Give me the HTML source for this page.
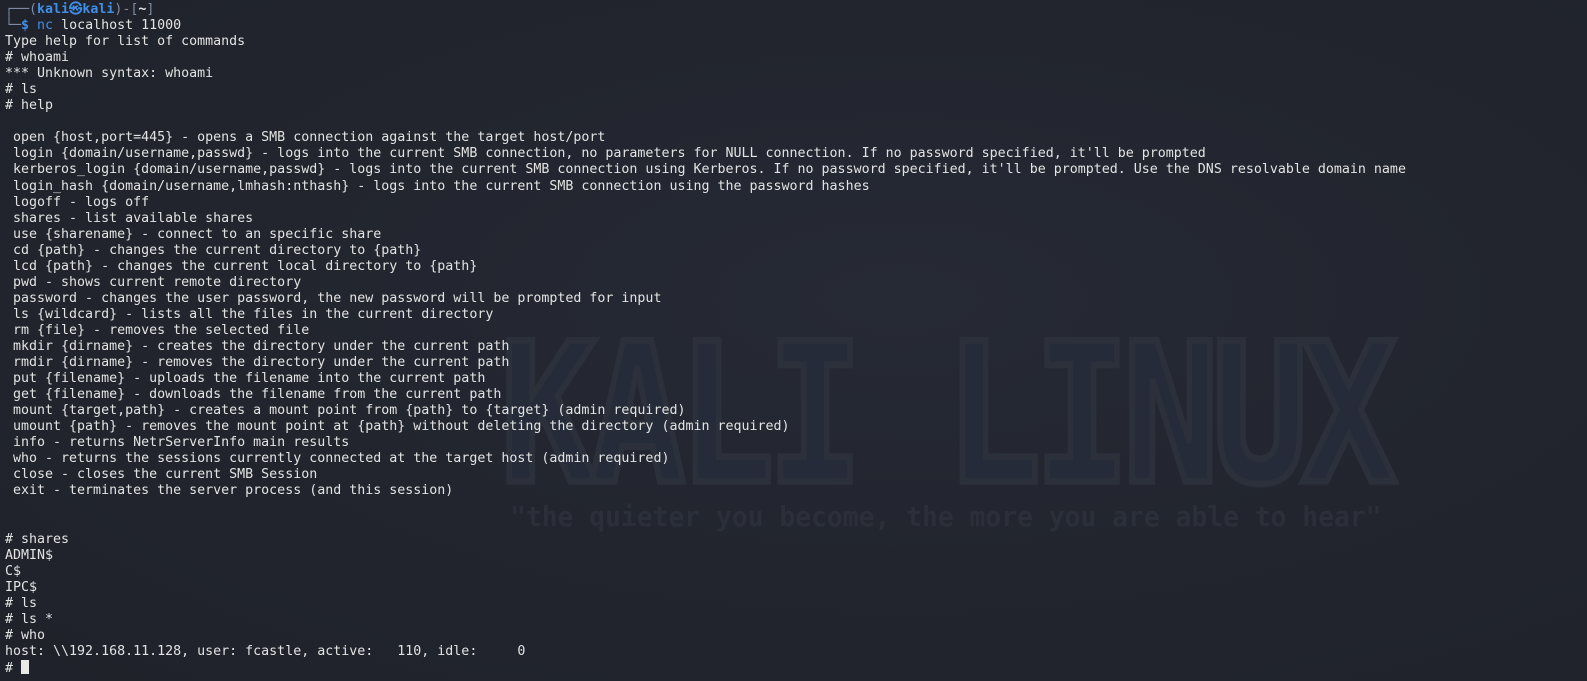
<!DOCTYPE html>
<html><head><meta charset="utf-8"><style>
html,body{margin:0;padding:0;width:1587px;height:681px;overflow:hidden;background:#22252e;}
body{position:relative;}
.bg{position:absolute;inset:0;background:radial-gradient(ellipse at 900px 300px,#262a35 0%,#22252e 50%,#1f222a 100%);}
.wm{position:absolute;left:500px;top:318px;font:bold 168px "DejaVu Sans Mono",monospace;letter-spacing:-8px;color:#252b38;-webkit-text-stroke:6px #2c303b;white-space:pre;transform:scale(0.955,1.15);transform-origin:0 0;line-height:1;}
.q{position:absolute;left:510px;top:500px;font:bold 28px "DejaVu Sans Mono",monospace;color:#2b2f39;white-space:pre;transform:scaleX(0.94);transform-origin:0 0;}
pre{position:absolute;left:5px;top:2px;margin:0;font:13.3px/16.05px "DejaVu Sans Mono","Liberation Mono",monospace;color:#e3e3e3;}
.g{color:#7f8ca3}.b{color:#3f8ee8;font-weight:bold}.d{color:#3f8ee8}
.cur{display:inline-block;width:8px;height:14px;background:#e8e8e8;vertical-align:-2px;}
</style></head><body>
<div class="bg"></div>
<div class="wm">KALI LINUX</div>
<div class="q">"the quieter you become, the more you are able to hear"</div>
<pre><span class="g">┌──(</span><span class="b">kali㉿kali</span><span class="g">)-[</span><span style="font-weight:bold">~</span><span class="g">]</span>
<span class="g">└─</span><span class="b">$</span> <span class="d">nc</span> localhost 11000
Type help for list of commands
# whoami
*** Unknown syntax: whoami
# ls
# help

 open {host,port=445} - opens a SMB connection against the target host/port
 login {domain/username,passwd} - logs into the current SMB connection, no parameters for NULL connection. If no password specified, it'll be prompted
 kerberos_login {domain/username,passwd} - logs into the current SMB connection using Kerberos. If no password specified, it'll be prompted. Use the DNS resolvable domain name
 login_hash {domain/username,lmhash:nthash} - logs into the current SMB connection using the password hashes
 logoff - logs off
 shares - list available shares
 use {sharename} - connect to an specific share
 cd {path} - changes the current directory to {path}
 lcd {path} - changes the current local directory to {path}
 pwd - shows current remote directory
 password - changes the user password, the new password will be prompted for input
 ls {wildcard} - lists all the files in the current directory
 rm {file} - removes the selected file
 mkdir {dirname} - creates the directory under the current path
 rmdir {dirname} - removes the directory under the current path
 put {filename} - uploads the filename into the current path
 get {filename} - downloads the filename from the current path
 mount {target,path} - creates a mount point from {path} to {target} (admin required)
 umount {path} - removes the mount point at {path} without deleting the directory (admin required)
 info - returns NetrServerInfo main results
 who - returns the sessions currently connected at the target host (admin required)
 close - closes the current SMB Session
 exit - terminates the server process (and this session)


# shares
ADMIN$
C$
IPC$
# ls
# ls *
# who
host: \\192.168.11.128, user: fcastle, active:   110, idle:     0
# <span class="cur"></span></pre>
</body></html>
